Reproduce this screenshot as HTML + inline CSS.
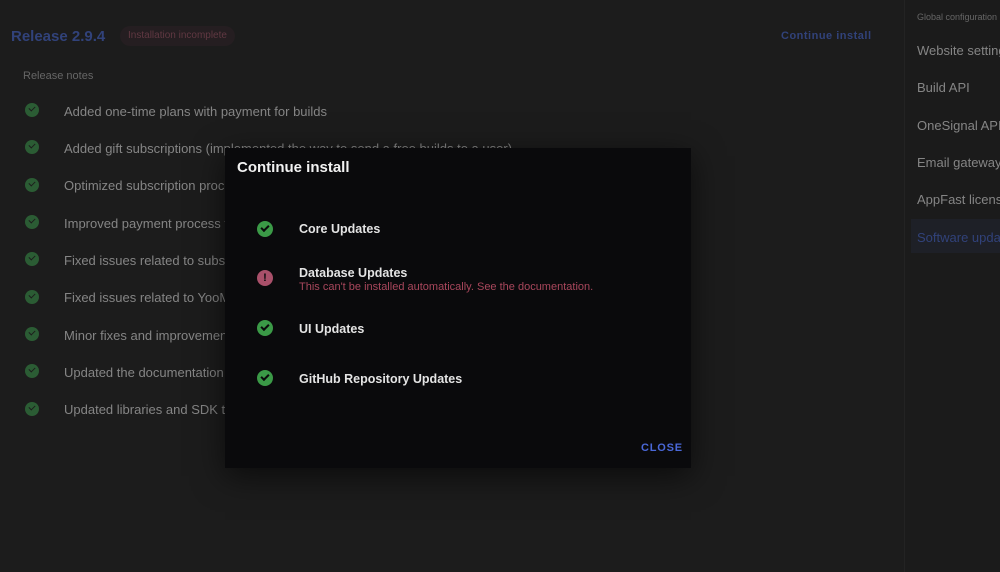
<!DOCTYPE html>
<html><head><style>
body{margin:0;width:1000px;height:572px;background:#1c1c1c;font-family:"Liberation Sans",sans-serif;position:relative;overflow:hidden}
.a{position:absolute;white-space:nowrap}
.side{position:absolute;left:904px;top:0;width:96px;height:572px;background:#1b1b1b;border-left:1px solid #232323}
.it{font-size:13px;color:#858585}
.ck{position:absolute;width:14px;height:14px;border-radius:50%;background:#2b5c34}
.ck:after{content:"";position:absolute;left:4px;top:3px;width:5px;height:3px;border-left:1.6px solid #1c1c1c;border-bottom:1.6px solid #1c1c1c;transform:rotate(-45deg)}
.dlg{position:absolute;left:225px;top:148px;width:466px;height:320px;background:#0a0a0c;box-shadow:0 8px 30px rgba(0,0,0,.6)}
.dck{position:absolute;left:32px;width:16px;height:16px;border-radius:50%;background:#3b9a47}
.dck:after{content:"";position:absolute;left:4px;top:4px;width:6px;height:3px;border-left:2px solid #0a0a0c;border-bottom:2px solid #0a0a0c;transform:rotate(-45deg)}
.dt{position:absolute;left:74px;font-size:12.5px;color:#e4e4e4;font-weight:bold;white-space:nowrap}
</style></head><body>
<div class="a" style="left:11px;top:28px;font-size:15px;color:#31427a;font-weight:bold">Release 2.9.4</div>
<div class="a" style="left:120px;top:26px;height:20px;width:115px;border-radius:10px;background:#251e21;color:#603842;font-size:10px;line-height:20px;text-align:center">Installation incomplete</div>
<div class="a" style="left:781px;top:30px;font-size:11px;color:#31427a;font-weight:bold;letter-spacing:.5px">Continue install</div>
<div class="a" style="left:23px;top:70px;font-size:11px;color:#666">Release notes</div>
<div class="ck" style="left:25px;top:103px"></div><div class="a it" style="left:64px;top:104px">Added one-time plans with payment for builds</div>
<div class="ck" style="left:25px;top:140px"></div><div class="a it" style="left:64px;top:141px">Added gift subscriptions (implemented the way to send a free builds to a user)</div>
<div class="ck" style="left:25px;top:178px"></div><div class="a it" style="left:64px;top:178px">Optimized subscription process</div>
<div class="ck" style="left:25px;top:215px"></div><div class="a it" style="left:64px;top:216px">Improved payment process for</div>
<div class="ck" style="left:25px;top:252px"></div><div class="a it" style="left:64px;top:253px">Fixed issues related to subscriptions</div>
<div class="ck" style="left:25px;top:290px"></div><div class="a it" style="left:64px;top:290px">Fixed issues related to YooMoney</div>
<div class="ck" style="left:25px;top:327px"></div><div class="a it" style="left:64px;top:328px">Minor fixes and improvements</div>
<div class="ck" style="left:25px;top:364px"></div><div class="a it" style="left:64px;top:365px">Updated the documentation</div>
<div class="ck" style="left:25px;top:402px"></div><div class="a it" style="left:64px;top:402px">Updated libraries and SDK to</div>
<div class="side">
<div class="a" style="left:12px;top:12px;font-size:9px;color:#666">Global configuration</div>
<div class="a it" style="left:12px;top:43px">Website settings</div>
<div class="a it" style="left:12px;top:80px">Build API</div>
<div class="a it" style="left:12px;top:118px">OneSignal API</div>
<div class="a it" style="left:12px;top:155px">Email gateway</div>
<div class="a it" style="left:12px;top:192px">AppFast license</div>
<div class="a" style="left:6px;top:219px;width:96px;height:34px;background:#1e2027"></div>
<div class="a it" style="left:12px;top:230px;color:#31427a">Software updates</div>
</div>
<div class="dlg">
<div class="a" style="left:12px;top:11px;font-size:15px;font-weight:bold;color:#f2f2f2">Continue install</div>
<div class="dck" style="top:73px"></div><div class="dt" style="top:74px">Core Updates</div>
<div class="a" style="left:32px;top:122px;width:16px;height:16px;border-radius:50%;background:#a9506a;color:#0a0a0c;font-size:11px;font-weight:bold;text-align:center;line-height:16px">!</div>
<div class="dt" style="top:118px">Database Updates</div>
<div class="a" style="left:74px;top:133px;font-size:11px;color:#a9475c">This can't be installed automatically. See the documentation.</div>
<div class="dck" style="top:172px"></div><div class="dt" style="top:174px">UI Updates</div>
<div class="dck" style="top:222px"></div><div class="dt" style="top:224px">GitHub Repository Updates</div>
<div class="a" style="left:416px;top:294px;font-size:11px;font-weight:bold;color:#4a68d8;letter-spacing:.8px">CLOSE</div>
</div>
</body></html>
